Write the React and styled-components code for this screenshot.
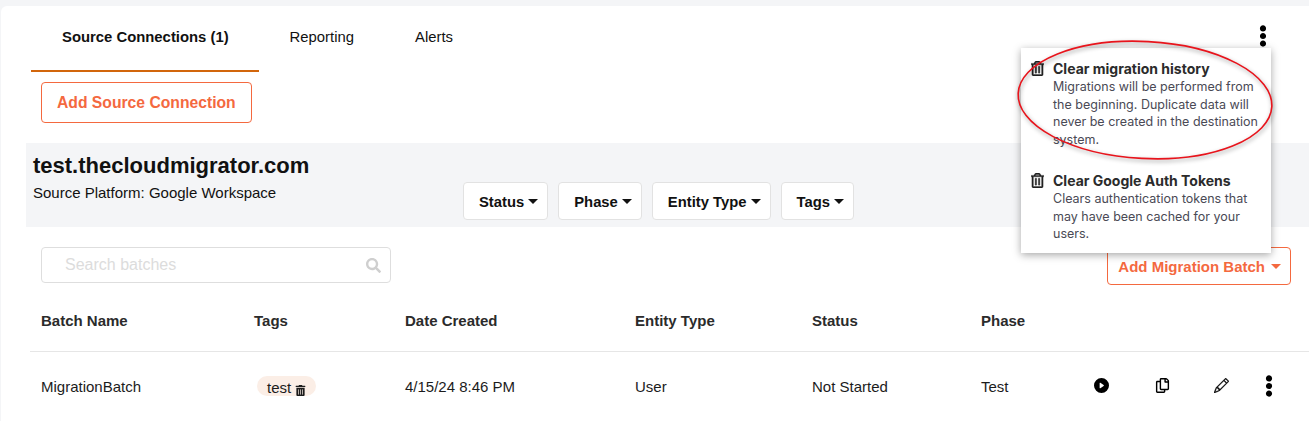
import React from 'react';
import styled, { createGlobalStyle } from 'styled-components';
import { BsPencil, BsPlayCircleFill } from 'react-icons/bs';
import { FaEllipsisV, FaRegCopy, FaRegTrashAlt, FaSearch, FaTrashAlt } from 'react-icons/fa';

const GlobalStyle = createGlobalStyle`
  html, body {
    margin: 0;
    padding: 0;
    height: 421px;
    overflow: hidden;
    background: #f4f5f7;
    font-family: "Liberation Sans", Arial, sans-serif;
    color: #111;
  }
`;

const Card = styled.div`
  position: relative;
  margin: 6px 0 0 1px;
  height: 415px;
  background: #fff;
  border-radius: 6px 0 0 0;
  overflow: hidden;
`;

const TabBar = styled.div`
  display: flex;
  height: 66px;
  padding: 0 30px;
  align-items: flex-start;
`;

const Tab = styled.div`
  box-sizing: border-box;
  height: 66px;
  padding: 22px 30px 0 31px;
  font-size: 14.85px;
  line-height: 18px;
  font-weight: ${p => (p.$active ? 700 : 400)};
  border-bottom: 2px solid ${p => (p.$active ? '#d2660c' : 'transparent')};
`;

const KebabTop = styled.div`
  display: flex;
  margin-left: auto;
  margin-right: 5px;
  padding-top: 19px;
  color: #000;
`;

const OutlineButton = styled.button`
  box-sizing: border-box;
  height: ${p => p.$h}px;
  padding: 0 ${p => p.$right}px 0 ${p => p.$left}px;
  background: #fff;
  border: 1px solid #f4693f;
  border-radius: 4px;
  color: #f4693f;
  font-family: inherit;
  font-size: ${p => p.$size}px;
  font-weight: 700;
  display: inline-flex;
  align-items: center;
  gap: 6px;
`;

const ConnectRow = styled.div`
  padding: 10px 40px 20px;
  display: flex;
`;

const Band = styled.div`
  display: flex;
  height: 84px;
  margin-left: 25px;
  background: #f4f5f7;
  box-sizing: border-box;
  padding: 10px 0 0 7px;
`;

const Source = styled.div`
  width: 430px;
`;

const Domain = styled.div`
  font-size: 22px;
  line-height: 26px;
  font-weight: 700;
`;

const Platform = styled.div`
  font-size: 15px;
  line-height: 18px;
  margin-top: 5px;
`;

const Filters = styled.div`
  display: flex;
  gap: 10px;
  padding-top: 29px;
`;

const Filter = styled.button`
  box-sizing: border-box;
  height: 38px;
  padding: 1px 9px 0 15px;
  background: #fff;
  border: 1px solid #e2e2e2;
  border-radius: 4px;
  font-family: inherit;
  font-size: 14.8px;
  font-weight: 700;
  color: #111;
  display: flex;
  align-items: center;
  gap: 4px;
`;

const Caret = styled.span`
  width: 0;
  height: 0;
  border-left: 5px solid transparent;
  border-right: 5px solid transparent;
  border-top: 5px solid currentColor;
`;

const Controls = styled.div`
  display: flex;
  justify-content: space-between;
  align-items: flex-start;
  padding: 20px 18px 0 40px;
`;

const Search = styled.div`
  box-sizing: border-box;
  width: 350px;
  height: 36px;
  border: 1px solid #dedede;
  border-radius: 4px;
  padding: 0 9px 0 23px;
  display: flex;
  align-items: center;
  justify-content: space-between;
  color: #dcdcdc;
  font-size: 16px;

  svg {
    color: #cfcfcf;
  }
`;

const Table = styled.div`
  margin-left: 29px;
  margin-top: 6px;
`;

const Row = styled.div`
  display: grid;
  grid-template-columns: 213px 151px 230px 177px 169px 1fr;
  height: ${p => p.$h}px;
  align-items: center;
  padding: 0 0 2px 11px;
  font-size: 15px;
  font-weight: ${p => (p.$head ? 700 : 400)};
  color: ${p => (p.$head ? '#2b2b2b' : '#1c1c1c')};
  border-bottom: ${p => (p.$head ? '1px solid #e6e6e6' : 'none')};
`;

const Tag = styled.span`
  box-sizing: border-box;
  justify-self: start;
  display: inline-flex;
  align-items: flex-start;
  gap: 4px;
  height: 20px;
  margin-left: 3px;
  padding: 3px 10px 0;
  border-radius: 10px;
  background: #fbeee6;
  line-height: 18px;
  overflow: hidden;

  svg {
    margin-top: 6px;
    flex: none;
  }
`;

const PhaseCell = styled.div`
  display: flex;
  align-items: center;
`;

const PhaseName = styled.span`
  flex: none;
  width: 110px;
`;

const Action = styled.span`
  display: flex;
  justify-content: center;
  flex: none;
  width: 20px;
  margin-right: ${p => p.$gap || 0}px;
  margin-top: -1px;
  color: #000;
`;

const Menu = styled.div`
  position: absolute;
  top: 42px;
  left: 1020px;
  width: 250px;
  height: 205px;
  box-sizing: border-box;
  padding: 12px 12px 0 10px;
  background: #fff;
  box-shadow: 0 2px 8px rgba(0, 0, 0, 0.35);
  font-family: Inter, "Liberation Sans", sans-serif;
`;

const MenuItem = styled.div`
  display: flex;
  gap: 9px;
  margin-bottom: 24px;
`;

const MenuIcon = styled.span`
  flex: none;
  width: 13px;
  height: 17px;
  display: flex;
  align-items: center;
  color: #222;

  svg {
    stroke-width: 14px;
  }
`;

const MenuTitle = styled.div`
  font-size: 14px;
  line-height: 17px;
  margin-bottom: 1px;
  font-weight: 700;
  color: #2b2b2b;
`;

const MenuText = styled.div`
  font-size: 12.5px;
  line-height: 17.5px;
  color: #4a4a55;
`;

const Annotation = styled.svg`
  position: absolute;
  top: 30px;
  left: 1009px;
  pointer-events: none;
  filter: drop-shadow(1px 2px 2px rgba(0, 0, 0, 0.4));
`;

const App = () => (
  <>
    <GlobalStyle />
    <Card>
      <TabBar>
        <Tab $active>Source Connections (1)</Tab>
        <Tab>Reporting</Tab>
        <Tab>Alerts</Tab>
        <KebabTop><FaEllipsisV size={22} /></KebabTop>
      </TabBar>
      <ConnectRow>
        <OutlineButton $h={41} $size={15.7} $left={15} $right={15}>Add Source Connection</OutlineButton>
      </ConnectRow>
      <Band>
        <Source>
          <Domain>test.thecloudmigrator.com</Domain>
          <Platform>Source Platform: Google Workspace</Platform>
        </Source>
        <Filters>
          {['Status', 'Phase', 'Entity Type', 'Tags'].map(name => (
            <Filter key={name}>{name} <Caret /></Filter>
          ))}
        </Filters>
      </Band>
      <Controls>
        <Search>Search batches <FaSearch size={15} /></Search>
        <OutlineButton $h={38} $size={15} $left={10} $right={9}>Add Migration Batch <Caret /></OutlineButton>
      </Controls>
      <Table>
        <Row $head $h={58}>
          <span>Batch Name</span>
          <span>Tags</span>
          <span>Date Created</span>
          <span>Entity Type</span>
          <span>Status</span>
          <span>Phase</span>
        </Row>
        <Row $h={68}>
          <span>MigrationBatch</span>
          <Tag>test <FaTrashAlt size={11} /></Tag>
          <span>4/15/24 8:46 PM</span>
          <span>User</span>
          <span>Not Started</span>
          <PhaseCell>
            <PhaseName>Test</PhaseName>
            <Action $gap={41}><BsPlayCircleFill size={15} /></Action>
            <Action $gap={39}><FaRegCopy size={15} /></Action>
            <Action $gap={28}><BsPencil size={15} strokeWidth={0.3} /></Action>
            <Action><FaEllipsisV size={22} /></Action>
          </PhaseCell>
        </Row>
      </Table>
      <Menu>
        <MenuItem>
          <MenuIcon><FaRegTrashAlt size={15} /></MenuIcon>
          <div>
            <MenuTitle>Clear migration history</MenuTitle>
            <MenuText>Migrations will be performed from the beginning. Duplicate data will never be created in the destination system.</MenuText>
          </div>
        </MenuItem>
        <MenuItem>
          <MenuIcon><FaRegTrashAlt size={15} /></MenuIcon>
          <div>
            <MenuTitle>Clear Google Auth Tokens</MenuTitle>
            <MenuText>Clears authentication tokens that may have been cached for your users.</MenuText>
          </div>
        </MenuItem>
      </Menu>
      <Annotation width="272" height="130" viewBox="0 0 272 130">
        <ellipse cx="135" cy="64" rx="127" ry="58.5" transform="rotate(3 135 64)" fill="none" stroke="#e8141c" strokeWidth="1.6" />
      </Annotation>
    </Card>
  </>
);

export default App;
